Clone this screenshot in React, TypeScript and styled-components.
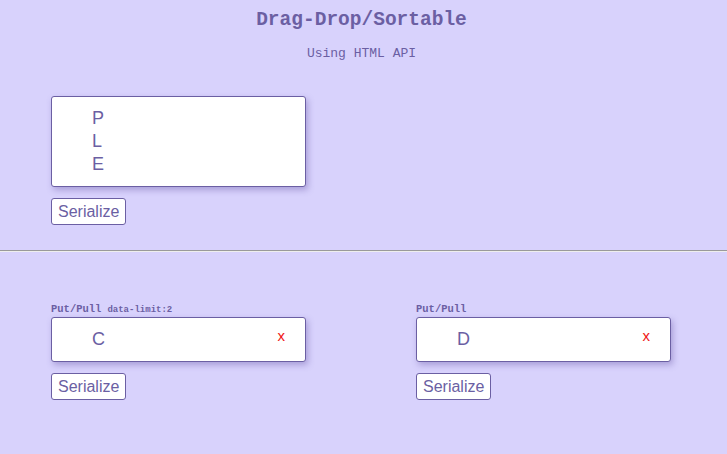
import React from "react";
import styled, { createGlobalStyle } from "styled-components";

const Global = createGlobalStyle`
  html, body { margin: 0; padding: 0; background: #d8d2fc; }
  body { font-family: "Liberation Sans", Arial, sans-serif; color: #6b5fa3; }
`;

const Page = styled.div`
  width: 727px;
  min-height: 454px;
  background: #d8d2fc;
`;

const Title = styled.h1`
  margin: 0;
  padding: 8px 4px 0 0;
  text-align: center;
  font-family: "Liberation Mono", "DejaVu Sans Mono", monospace;
  font-weight: bold;
  font-size: 19.5px;
  line-height: 24px;
  color: #6b5fa3;
`;

const Subtitle = styled.p`
  margin: 14px 0 0;
  padding-right: 4px;
  text-align: center;
  font-family: "Liberation Mono", "DejaVu Sans Mono", monospace;
  font-size: 13px;
  line-height: 16px;
  color: #6b5fa3;
`;

const Section = styled.section<{ $top: number; $bottom: number }>`
  display: grid;
  grid-template-columns: 365px 1fr;
  padding: ${(p) => p.$top}px 0 ${(p) => p.$bottom}px;
`;

const Column = styled.div`
  box-sizing: border-box;
  padding-left: 51px;
  display: flex;
  flex-direction: column;
  align-items: flex-start;
`;

const Label = styled.div`
  height: 12px;
  font-family: "Liberation Mono", "DejaVu Sans Mono", monospace;
  font-weight: bold;
  font-size: 10.5px;
  line-height: 12px;
  margin-bottom: 2px;
  color: #6b5fa3;
`;

const Small = styled.span`
  font-size: 9px;
  line-height: 1;
  margin-left: 6px;
`;

const List = styled.ul<{ $minHeight: number }>`
  list-style: none;
  margin: 0;
  box-sizing: border-box;
  width: 255px;
  min-height: ${(p) => p.$minHeight}px;
  padding: 10px 20px 8px 40px;
  background: #fff;
  border: 1px solid #6b5fa3;
  border-radius: 3px;
  box-shadow: 2px 3px 6px rgba(80, 60, 150, 0.35);
`;

const Item = styled.li`
  display: flex;
  justify-content: space-between;
  align-items: center;
  font-family: "Liberation Sans", Arial, sans-serif;
  font-size: 18px;
  line-height: 23px;
  color: #6b5fa3;
`;

const Remove = styled.span`
  font-family: "Liberation Sans", Arial, sans-serif;
  font-size: 15px;
  color: #f01818;
  margin-top: -8px;
`;

const Button = styled.button`
  margin-top: 11px;
  height: 27px;
  padding: 0 6px;
  background: #fff;
  border: 1px solid #6b5fa3;
  border-radius: 3px;
  font-family: "Liberation Sans", Arial, sans-serif;
  font-size: 16px;
  color: #6b5fa3;
`;

const Rule = styled.hr`
  margin: 0;
  border: none;
  border-top: 1px solid #9a9a9a;
  border-bottom: 1px solid #eeeeee;
`;

export default function App() {
  return (
    <Page>
      <Global />
      <Title>Drag-Drop/Sortable</Title>
      <Subtitle>Using HTML API</Subtitle>
      <Section $top={34} $bottom={25}>
        <Column>
          <List $minHeight={91}>
            <Item>P</Item>
            <Item>L</Item>
            <Item>E</Item>
          </List>
          <Button>Serialize</Button>
        </Column>
      </Section>
      <Rule />
      <Section $top={51} $bottom={40}>
        <Column>
          <Label>
            Put/Pull<Small>data-limit:2</Small>
          </Label>
          <List $minHeight={45}>
            <Item>
              C<Remove>x</Remove>
            </Item>
          </List>
          <Button>Serialize</Button>
        </Column>
        <Column>
          <Label>Put/Pull</Label>
          <List $minHeight={45}>
            <Item>
              D<Remove>x</Remove>
            </Item>
          </List>
          <Button>Serialize</Button>
        </Column>
      </Section>
    </Page>
  );
}
